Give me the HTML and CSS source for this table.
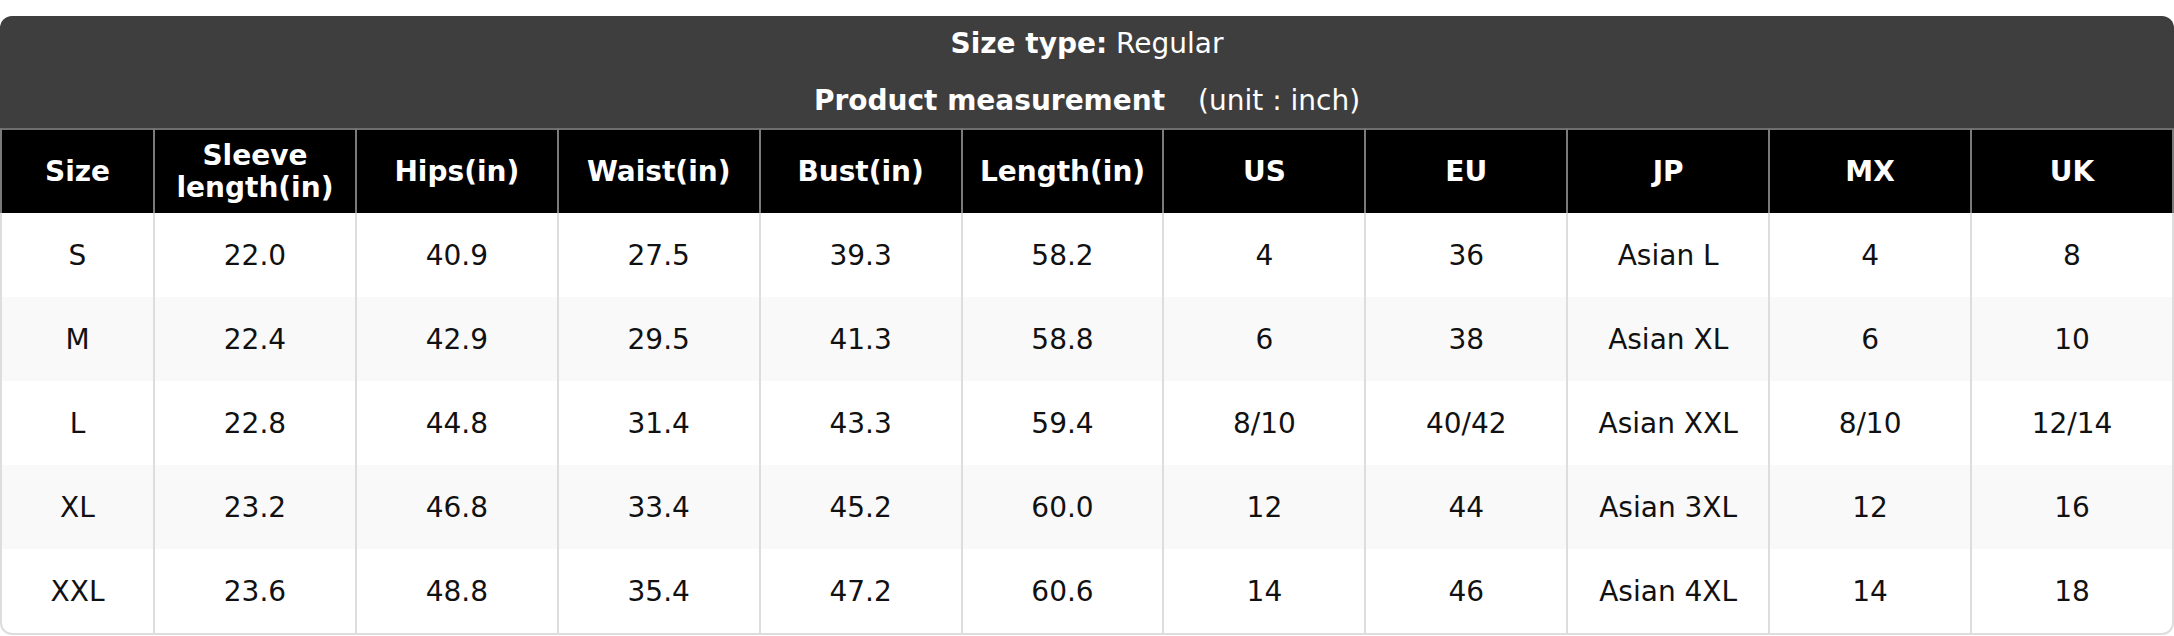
FILE: index.html
```html
<!DOCTYPE html>
<html lang="en">
<head>
<meta charset="utf-8">
<title>Size chart</title>
<link rel="stylesheet" href="styles.css">
</head>
<body>
<div class="chart">
  <div class="chart-title">
    <div class="title-line"><strong>Size type:</strong> Regular</div>
    <div class="title-line second"><strong>Product measurement</strong><span class="unit">(unit : inch)</span></div>
  </div>
  <table class="size-table">
    <colgroup>
      <col class="col-size">
      <col><col><col><col><col><col><col><col><col><col>
    </colgroup>
    <thead>
      <tr>
        <th>Size</th>
        <th>Sleeve length(in)</th>
        <th>Hips(in)</th>
        <th>Waist(in)</th>
        <th>Bust(in)</th>
        <th>Length(in)</th>
        <th>US</th>
        <th>EU</th>
        <th>JP</th>
        <th>MX</th>
        <th>UK</th>
      </tr>
    </thead>
    <tbody>
      <tr><td>S</td><td>22.0</td><td>40.9</td><td>27.5</td><td>39.3</td><td>58.2</td><td>4</td><td>36</td><td>Asian L</td><td>4</td><td>8</td></tr>
      <tr><td>M</td><td>22.4</td><td>42.9</td><td>29.5</td><td>41.3</td><td>58.8</td><td>6</td><td>38</td><td>Asian XL</td><td>6</td><td>10</td></tr>
      <tr><td>L</td><td>22.8</td><td>44.8</td><td>31.4</td><td>43.3</td><td>59.4</td><td>8/10</td><td>40/42</td><td>Asian XXL</td><td>8/10</td><td>12/14</td></tr>
      <tr><td>XL</td><td>23.2</td><td>46.8</td><td>33.4</td><td>45.2</td><td>60.0</td><td>12</td><td>44</td><td>Asian 3XL</td><td>12</td><td>16</td></tr>
      <tr><td>XXL</td><td>23.6</td><td>48.8</td><td>35.4</td><td>47.2</td><td>60.6</td><td>14</td><td>46</td><td>Asian 4XL</td><td>14</td><td>18</td></tr>
    </tbody>
  </table>
</div>
</body>
</html>
```

FILE: styles.css
```css
html, body {
  margin: 0;
  padding: 0;
  background: #ffffff;
}

body {
  padding-top: 16px;
  font-family: "DejaVu Sans", Verdana, sans-serif;
  font-size: 28px;
  color: #111111;
}

.chart {
  background: #ffffff;
}

.chart-title {
  background: #3e3e3e;
  color: #ffffff;
  text-align: center;
  padding: 11px 0 10px;
  height: 112px;
  box-sizing: border-box;
  border-radius: 12px 12px 0 0;
}

.title-line {
  line-height: 34px;
  white-space: nowrap;
}

.title-line.second {
  margin-top: 23px;
}

.title-line strong {
  font-weight: bold;
}

.unit {
  margin-left: 33px;
}

.size-table {
  width: 100%;
  table-layout: fixed;
  border-collapse: separate;
  border-spacing: 0;
}

.col-size {
  width: 155px;
}

.size-table th,
.size-table td {
  text-align: center;
  vertical-align: middle;
  padding: 0 8px;
}

.size-table thead tr {
  height: 85px;
}

.size-table th {
  background: #000000;
  color: #ffffff;
  font-weight: bold;
  line-height: 32px;
  border-top: 2px solid #6e6e6e;
  border-right: 2px solid #7a7a7a;
}

.size-table th:first-child {
  border-left: 2px solid #7a7a7a;
}

.size-table tbody tr {
  height: 84px;
}

.size-table tbody tr:last-child {
  height: 86px;
}

.size-table td {
  line-height: 34px;
  padding-top: 2px;
  border-right: 2px solid #dddddd;
}

.size-table td:first-child {
  border-left: 2px solid #dddddd;
}

.size-table tbody tr:last-child td {
  border-bottom: 2px solid #dddddd;
}

.size-table tbody tr:last-child td:first-child {
  border-bottom-left-radius: 12px;
}

.size-table tbody tr:last-child td:last-child {
  border-bottom-right-radius: 12px;
}

.size-table tbody tr:nth-child(even) td {
  background: #f9f9f9;
}
```
